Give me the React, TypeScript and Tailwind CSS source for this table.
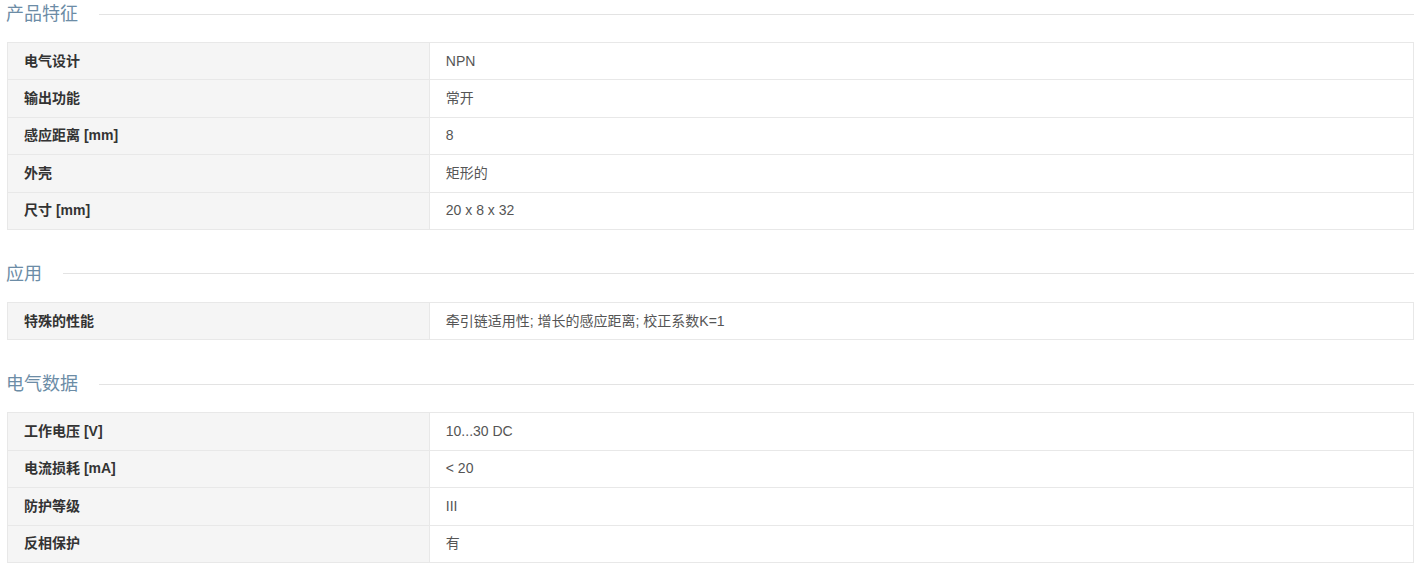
const sections: { title: string; rows: [string, string][] }[] = [
  {
    title: '产品特征',
    rows: [
      ['电气设计', 'NPN'],
      ['输出功能', '常开'],
      ['感应距离 [mm]', '8'],
      ['外壳', '矩形的'],
      ['尺寸 [mm]', '20 x 8 x 32'],
    ],
  },
  {
    title: '应用',
    rows: [['特殊的性能', '牵引链适用性; 增长的感应距离; 校正系数K=1']],
  },
  {
    title: '电气数据',
    rows: [
      ['工作电压 [V]', '10...30 DC'],
      ['电流损耗 [mA]', '< 20'],
      ['防护等级', 'III'],
      ['反相保护', '有'],
    ],
  },
];

export default function App() {
  return (
    <div
      className="bg-white px-[7px] text-[14px] text-[#555]"
      style={{ fontFamily: '"Liberation Sans", "Noto Sans CJK SC", sans-serif' }}
    >
      {sections.map((section) => (
        <div key={section.title} className="mb-[30px]">
          <div className="flex h-[28px] items-center">
            <h3 className="-ml-[1px] text-[18px] font-normal leading-[28px] text-[#6c8ca6]">
              {section.title}
            </h3>
            <div className="ml-[21px] h-px flex-1 bg-[#e3e3e3]" />
          </div>
          <table className="mt-[14px] w-full border-collapse border border-[#e8e8e8]">
            <tbody>
              {section.rows.map(([label, value]) => (
                <tr key={label} className="h-[37.4px] border-b border-[#e8e8e8]">
                  <td className="w-[30%] border-r border-[#e8e8e8] bg-[#f5f5f5] pl-[16px] font-bold text-[#333]">
                    {label}
                  </td>
                  <td className="pl-[16px]">{value}</td>
                </tr>
              ))}
            </tbody>
          </table>
        </div>
      ))}
    </div>
  );
}
